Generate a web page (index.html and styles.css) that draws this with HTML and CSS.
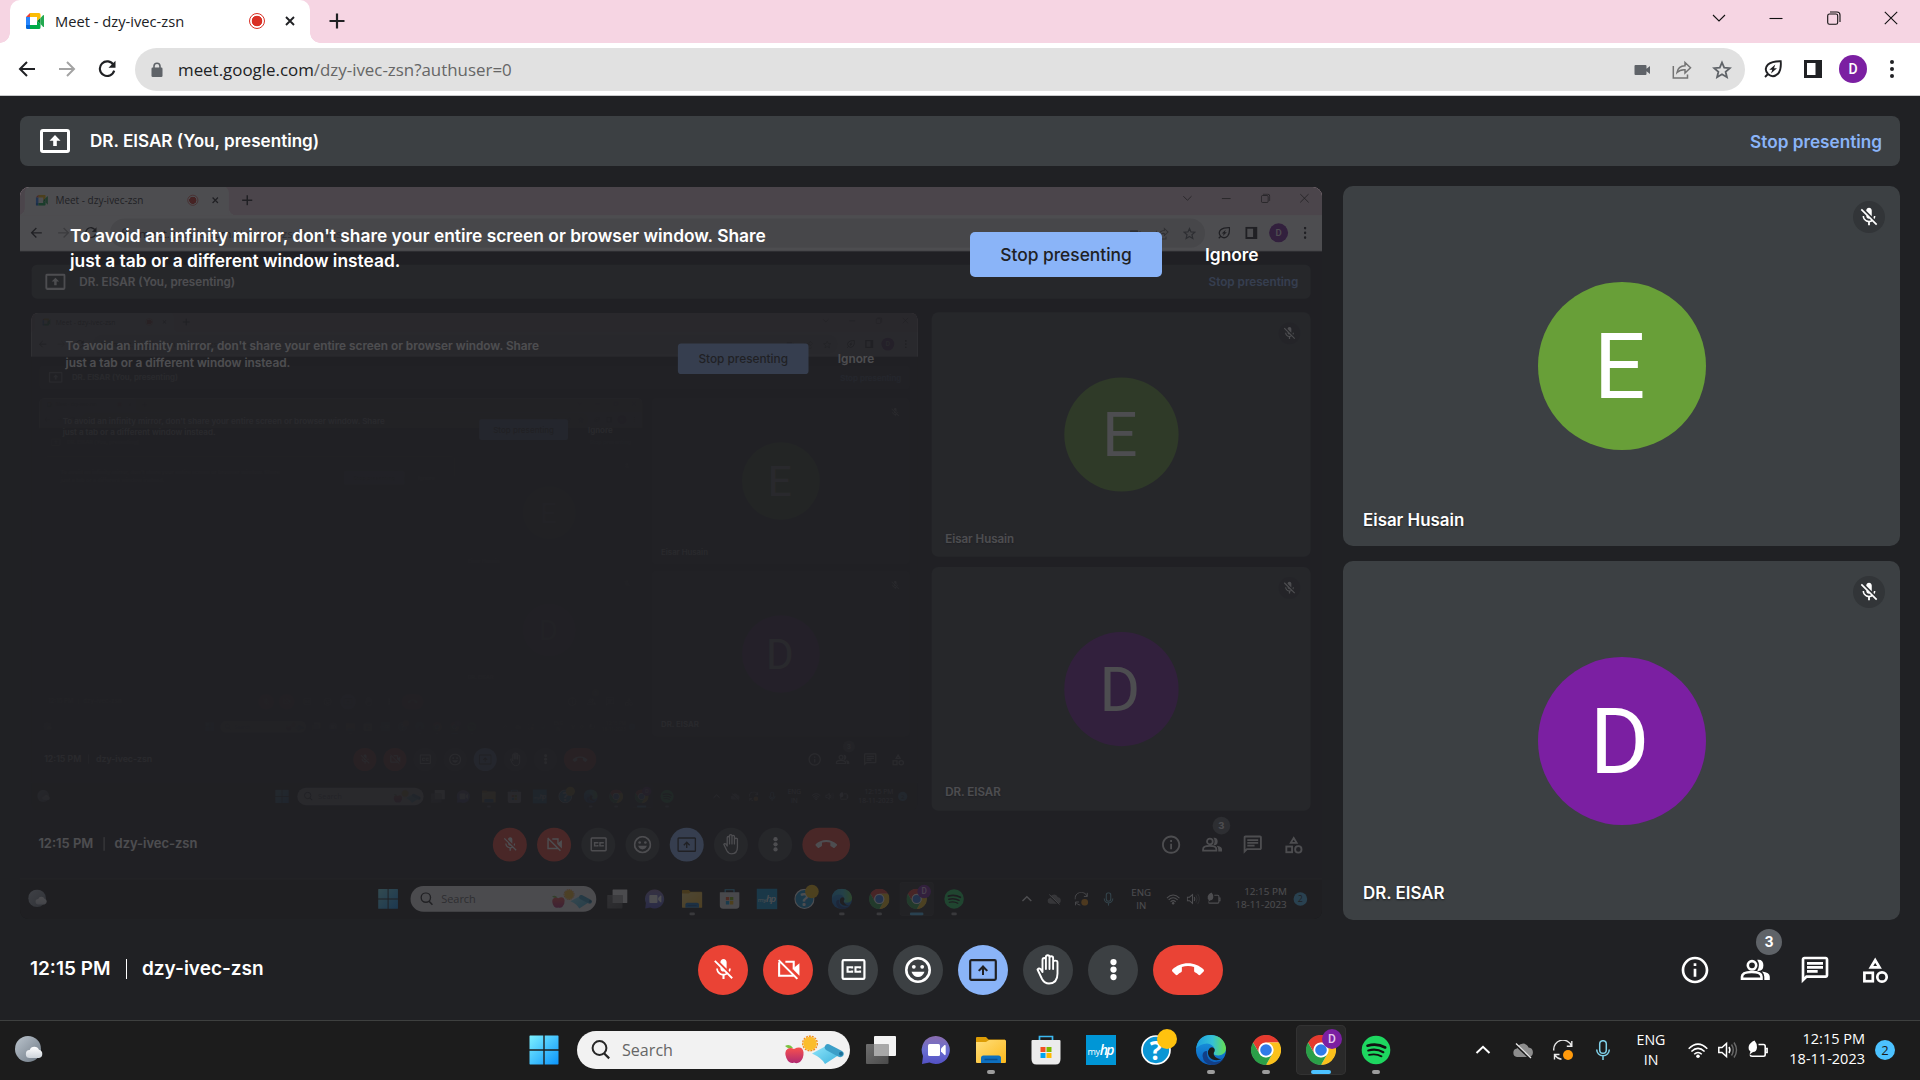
FILE: index.html
```html
<!DOCTYPE html>
<html lang="en">
<head>
<meta charset="utf-8">
<title>Meet - dzy-ivec-zsn</title>
<link rel="stylesheet" href="styles.css">
</head>
<body>
<svg class="defs" aria-hidden="true">
  <defs>
    <linearGradient id="win" x1="0" y1="0" x2="1" y2="1"><stop offset="0" stop-color="#7df1ff"/><stop offset="1" stop-color="#0b94fb"/></linearGradient>
    <linearGradient id="moon" x1="0" y1="0" x2="1" y2="1"><stop offset="0" stop-color="#bcc5ce"/><stop offset="1" stop-color="#6d7883"/></linearGradient>
    <linearGradient id="cloud" x1="0" y1="0" x2="0" y2="1"><stop offset="0" stop-color="#fff"/><stop offset="1" stop-color="#cdd3da"/></linearGradient>
    <linearGradient id="grey" x1="0" y1="0" x2="1" y2="1"><stop offset="0" stop-color="#6f6f6f"/><stop offset="1" stop-color="#4a4a4a"/></linearGradient>
    <linearGradient id="chat" x1="0" y1="0" x2="0" y2="1"><stop offset="0" stop-color="#8a6cae"/><stop offset=".5" stop-color="#6a6fd0"/><stop offset="1" stop-color="#5350c4"/></linearGradient>
    <linearGradient id="folder" x1="0" y1="0" x2="1" y2="1"><stop offset="0" stop-color="#ffde7a"/><stop offset="1" stop-color="#fcb91c"/></linearGradient>
    <linearGradient id="mat" x1="0" y1="0" x2="1" y2="1"><stop offset="0" stop-color="#8fe6fb"/><stop offset="1" stop-color="#3fb3dd"/></linearGradient>
    <linearGradient id="apple" x1="0" y1="0" x2="0" y2="1"><stop offset="0" stop-color="#f8514d"/><stop offset="1" stop-color="#b02a72"/></linearGradient>
    <linearGradient id="edgeTop" x1="0" y1="0" x2="1" y2="0"><stop offset="0" stop-color="#1c9fe0"/><stop offset=".55" stop-color="#35c1d6"/><stop offset="1" stop-color="#66e04c"/></linearGradient>
    <linearGradient id="edgeLow" x1="0" y1="0" x2="0" y2="1"><stop offset="0" stop-color="#1b9de2"/><stop offset="1" stop-color="#0a5fc0"/></linearGradient>
    <symbol id="mic-off" viewBox="0 0 24 24"><path fill="currentColor" d="M19 11h-1.7c0 .74-.16 1.43-.43 2.05l1.23 1.23c.56-.98.9-2.09.9-3.28zm-4.02.17c0-.06.02-.11.02-.17V5c0-1.66-1.34-3-3-3S9 3.34 9 5v.18l5.98 5.99zM4.27 3L3 4.27l6.01 6.01V11c0 1.66 1.33 3 2.99 3 .22 0 .44-.03.65-.08l1.66 1.66c-.71.33-1.5.52-2.31.52-2.76 0-5.3-2.1-5.3-5.1H5c0 3.41 2.72 6.23 6 6.72V21h2v-3.28c.91-.13 1.77-.45 2.54-.9L19.73 21 21 19.73 4.27 3z"/></symbol>
    <symbol id="chrome" viewBox="0 0 30 30"><circle cx="15" cy="15" r="14.500" fill="#fff"/><path fill="#e53a2e" d="M2 7.500A15 15 0 0 1 28 7.500H15A7.500 7.500 0 0 0 8.500 18.750Z"/><path fill="#fbc11c" d="M28 7.500A15 15 0 0 1 15 30L21.500 18.750A7.500 7.500 0 0 0 15 7.500Z"/><path fill="#2b9f48" d="M2 7.500A15 15 0 0 0 15 30L21.500 18.750A7.500 7.500 0 0 1 8.500 18.750Z"/><circle cx="15" cy="15" r="7.200" fill="#fff"/><circle cx="15" cy="15" r="5.800" fill="#2f7be9"/></symbol>
  </defs>
</svg>

<div class="screen">
  <header class="browser">
    <div class="tabstrip">
      <div class="tab">
        <svg class="favicon" viewBox="0 0 18 16"><path fill="#fbbc04" d="M4 0h9q1.500 0 1.500 1.500V5L11 8V4H4z"/><path fill="#ea4335" d="M4 0v4H0z"/><path fill="#2684fc" d="M0 4h4v8H0z"/><path fill="#0066da" d="M0 12h4v4H1.300Q0 16 0 14.700z"/><path fill="#00ac47" d="M4 12h7V8l3.500 3v3.500q0 1.500-1.500 1.500H4z"/><path fill="#00832d" d="M11 8l3.500-3v6z"/><path fill="#22a950" d="M14.500 5L17 2.200q1-.700 1 .400v10.800q0 1.100-1 .400L14.500 11z"/></svg>
        <span class="tab-title">Meet - dzy-ivec-zsn</span>
        <span class="record"></span>
        <svg class="tab-close" viewBox="0 0 10 10"><path d="M1 1l8 8M9 1L1 9" stroke="#202124" stroke-width="1.900"/></svg>
      </div>
      <svg class="new-tab" viewBox="0 0 16 16"><path d="M8 .500v15M.500 8h15" stroke="#202124" stroke-width="2.200"/></svg>
      <div class="window-controls">
        <svg viewBox="0 0 14 14"><path d="M1 4l6 6 6-6"/></svg>
        <svg viewBox="0 0 14 14"><path d="M.500 7.500h13"/></svg>
        <svg viewBox="0 0 14 14"><rect x=".700" y="3" width="10" height="10.300" rx="1.800"/><path d="M3 1h7q3 0 3 3v7"/></svg>
        <svg viewBox="0 0 14 14"><path d="M.800.800l12.400 12.400M13.200.800L.800 13.200"/></svg>
      </div>
    </div>
    <div class="toolbar">
      <svg class="nav" viewBox="0 0 18 18"><path d="M17 9H2.500M9 2L2 9l7 7" fill="none" stroke="#202124" stroke-width="2"/></svg>
      <svg class="nav" viewBox="0 0 18 18"><path d="M1 9h14.500M9 2l7 7-7 7" fill="none" stroke="#a3a3a3" stroke-width="2"/></svg>
      <svg class="nav" viewBox="0 0 18 18"><path d="M15.500 5A7.300 7.300 0 1 0 16.200 10.600" fill="none" stroke="#202124" stroke-width="2.100"/><path d="M17.500.800v7h-7z" fill="#202124"/></svg>
      <div class="omnibox">
        <svg class="lock" viewBox="0 0 12 16"><rect x=".500" y="5.500" width="11" height="9.500" rx="1.200" fill="#5f6368"/><path d="M3 6V4.200a3 3 0 0 1 6 0V6" fill="none" stroke="#5f6368" stroke-width="1.600"/></svg>
        <span class="url">meet.google.com<span class="path">/dzy-ivec-zsn?authuser=0</span></span>
        <svg class="omni-icon" viewBox="0 0 20 20"><path fill="#5f6368" d="M3.500 5h10q1 0 1 1v2.800L18 6v8l-3.500-2.800V14q0 1-1 1h-10q-1 0-1-1V6q0-1 1-1z"/></svg>
        <svg class="omni-icon" viewBox="0 0 20 20"><path fill="none" stroke="#747474" stroke-width="1.500" d="M1.300 6v12h14.200v-3.500M5 12.500q1-6.500 8-6.800V2.500l5.500 5.300L13 13V9.800q-5-.300-8 2.700z"/></svg>
        <svg class="omni-icon" viewBox="0 0 20 20"><path fill="none" stroke="#5f6368" stroke-width="1.800" d="M10 2.500l2.200 5.100 5.600.500-4.200 3.700 1.300 5.400L10 14.300l-4.900 2.900 1.300-5.400L2.200 8.100l5.600-.500z"/></svg>
      </div>
      <svg class="ext" viewBox="0 0 18 18"><path fill="none" stroke="#202124" stroke-width="1.900" d="M1 17l3-3M4 14q-4.500-5 0-9.500Q8 1 16.700 1.200 17.500 10 14 13.800 9 18.500 4 14z"/><path fill="#202124" d="M11.300 4.500L5.300 9.800h3L7 13.500l6-5.300h-3z"/></svg>
      <svg class="ext" viewBox="0 0 18 18"><path fill="#202124" fill-rule="evenodd" d="M0 0h18v18H0zM3 3v12h8.500V3z"/></svg>
      <span class="profile">D</span>
      <svg class="kebab" viewBox="0 0 4 18"><circle cx="2" cy="2" r="2"/><circle cx="2" cy="9" r="2"/><circle cx="2" cy="16" r="2"/></svg>
    </div>
  </header>

  <main class="meet">
    <div class="presenting">
      <svg class="present-icon" viewBox="0 0 30 24"><rect x="1.500" y="1.500" width="27" height="21" rx="1.500" fill="none" stroke="#fff" stroke-width="3"/><path fill="#fff" d="M15 6l5.500 5.700h-3.700V17h-3.600v-5.300H9.500z"/></svg>
      <span>DR. EISAR (You, presenting)</span>
      <span class="stop-link">Stop presenting</span>
    </div>

    <div class="stage">
      <div class="preview">
        <div class="notice">
          <p>To avoid an infinity mirror, don't share your entire screen or browser window. Share just a tab or a different window instead.</p>
          <span class="stop-button">Stop presenting</span>
          <span class="ignore">Ignore</span>
        </div>
      </div>
      <div class="tiles">
        <div class="tile">
          <span class="mute"><svg><use href="#mic-off"/></svg></span>
          <span class="avatar green">E</span>
          <span class="name">Eisar Husain</span>
        </div>
        <div class="tile">
          <span class="mute"><svg><use href="#mic-off"/></svg></span>
          <span class="avatar purple">D</span>
          <span class="name">DR. EISAR</span>
        </div>
      </div>
    </div>

    <div class="callbar">
      <div class="meeting"><span class="time">12:15 PM</span><span class="divider"></span><span class="code">dzy-ivec-zsn</span></div>
      <div class="controls">
        <span class="round red"><svg viewBox="0 0 24 24"><use href="#mic-off"/></svg></span>
        <span class="round red"><svg viewBox="0 0 24 24"><path fill="none" stroke="currentColor" stroke-width="2" d="M9 4.500h8v7.500M17 18H3V5M2.500 3L20.500 21"/><path fill="currentColor" d="M17 10.500L22.500 6v12L17 12.500z"/></svg></span>
        <span class="round"><svg viewBox="0 0 24 24"><rect x="1.500" y="3" width="21" height="18" rx="1.200" fill="none" stroke="currentColor" stroke-width="2.100"/><path fill="none" stroke="currentColor" stroke-width="2" d="M10.700 11V9.800H6.300v4.400h4.400V13M18.300 11V9.800h-4.400v4.400h4.400V13"/></svg></span>
        <span class="round"><svg class="smile" viewBox="0 0 26 26"><circle cx="13" cy="13" r="11.700" fill="none" stroke="currentColor" stroke-width="2.600"/><circle cx="8.800" cy="9.800" r="1.900" fill="currentColor"/><circle cx="17.200" cy="9.800" r="1.900" fill="currentColor"/><path fill="currentColor" d="M6.500 14.800h13q-2 5.200-6.500 5.200t-6.500-5.200z"/></svg></span>
        <span class="round blue"><svg class="wide" viewBox="0 0 28 24"><rect x="1.200" y="2.200" width="25.600" height="19.600" rx="1.200" fill="none" stroke="currentColor" stroke-width="2.200"/><path fill="currentColor" d="M14 7l5 5.200-1.400 1.400L15 11.200V17h-2v-5.800l-2.600 2.400L9 12.200z"/></svg></span>
        <span class="round"><svg class="hand" viewBox="0 0 24 31"><path fill="none" stroke="currentColor" stroke-width="1.900" stroke-linejoin="round" stroke-linecap="round" d="M6.500 18V6Q6.500 4 8.200 4T9.900 6v9M9.900 14V3Q9.900 1.200 11.700 1.200T13.500 3v12M13.500 14V4Q13.500 2.300 15.300 2.300T17.100 4v11M17.100 15V8.500q0-1.900 2.200-1.900T21.500 8.500V19.500q0 10-8.500 10-4.500 0-7-4.500L1.500 15.500q1.300-1.800 3-.500l2 3"/></svg></span>
        <span class="round"><svg viewBox="0 0 24 24" fill="currentColor"><circle cx="12" cy="4.800" r="3"/><circle cx="12" cy="12" r="3"/><circle cx="12" cy="19.200" r="3"/></svg></span>
        <span class="round red hangup"><svg viewBox="0 0 24 24"><path fill="currentColor" d="M12 9c-1.600 0-3.150.25-4.600.72v3.100c0 .39-.23.74-.56.9-.98.49-1.870 1.120-2.660 1.850-.18.18-.43.28-.7.28-.28 0-.53-.11-.71-.29L.29 13.080c-.18-.17-.29-.42-.29-.7 0-.28.11-.53.29-.71C3.340 8.780 7.460 7 12 7s8.660 1.780 11.710 4.670c.18.18.29.43.29.71 0 .28-.11.53-.29.71l-2.480 2.480c-.18.18-.43.29-.71.29-.27 0-.52-.11-.7-.28-.79-.74-1.690-1.360-2.670-1.850-.33-.16-.56-.5-.56-.9v-3.100C15.150 9.250 13.600 9 12 9z"/></svg></span>
      </div>
      <div class="panels">
        <span class="panel"><svg viewBox="0 0 24 24"><path fill="currentColor" d="M11 7h2v2h-2zm0 4h2v6h-2zm1-9C6.480 2 2 6.480 2 12s4.480 10 10 10 10-4.480 10-10S17.520 2 12 2zm0 18c-4.410 0-8-3.590-8-8s3.590-8 8-8 8 3.590 8 8-3.590 8-8 8z"/></svg></span>
        <span class="panel"><svg viewBox="0 0 32 32" fill="none" stroke="currentColor" stroke-width="2.600"><circle cx="13" cy="11.300" r="4.200"/><path d="M3 24.700v-2q0-4.700 9.700-4.700t9.800 4.700v2z"/><path fill="currentColor" stroke="none" d="M18.200 5.800q6.200-.800 6.200 5.500t-6.200 5.500q3.500-5.500 0-11zM23 17.500q7.800.900 7.800 5.300V26h-5.500v-3.300q0-2.800-2.300-5.200z"/></svg><span class="count">3</span></span>
        <span class="panel"><svg viewBox="0 0 24 24"><path fill="currentColor" d="M4 4h16v12H5.170L4 17.170V4m0-2c-1.100 0-1.990.9-1.990 2L2 22l4-4h14c1.100 0 2-.9 2-2V4c0-1.100-.9-2-2-2H4zm2 10h8v2H6v-2zm0-3h12v2H6V9zm0-3h12v2H6V6z"/></svg></span>
        <span class="panel"><svg viewBox="0 0 32 32" fill="none" stroke="currentColor" stroke-width="2.700"><path d="M16.200 6.200l4.300 7.200h-8.600z"/><rect x="5.400" y="18.800" width="8.400" height="8.400"/><circle cx="23" cy="23" r="4.700"/></svg></span>
      </div>
    </div>
  </main>

  <footer class="taskbar">
    <svg class="weather" viewBox="0 0 30 28"><circle cx="13" cy="13" r="13" fill="url(#moon)"/><path fill="url(#cloud)" d="M15 22a4 4 0 0 1-.300-8 5 5 0 0 1 9.300-.200 4.200 4.200 0 0 1 0 8.200z"/></svg>
    <div class="apps">
      <span class="app"><svg viewBox="0 0 30 30"><path fill="url(#win)" d="M1 .500h13.300v13.800H.500V1zM15.700.500H29l.500.500v13.300H15.700zM.500 15.700h13.800v13.800H1l-.500-.500zM15.700 15.700h13.800V29l-.500.500H15.700z"/></svg></span>
      <div class="search">
        <svg class="lens" viewBox="0 0 20 20"><circle cx="8.500" cy="8" r="6.900" fill="none" stroke="#262626" stroke-width="2"/><path d="M13 13.200l5.200 5.200" stroke="#262626" stroke-width="2.200"/></svg>
        <span>Search</span>
        <svg class="doodle" viewBox="0 0 60 30"><path fill="#7ac142" d="M1 11q5-2.500 8 2-5 1.500-8-2z"/><path fill="url(#apple)" d="M10 14q8-4 9.500 3 .500 6-3.500 10-3 2-6 .500-3 1.500-6-1.500-4-6-2-10.500 3-4 8-1.500z"/><circle cx="26" cy="8.500" r="7.300" fill="none" stroke="#f28a1c" stroke-width="1.400" stroke-dasharray="2 1"/><circle cx="26" cy="8.500" r="6.700" fill="#fbbd2e"/><path fill="url(#mat)" d="M28 18.500l13-7 13 9-13 8.500q-3-6-13-10.500z"/><path fill="#3b9fc8" d="M41 11q1-2.500 4-1.700L58 16q3 2 1 5-2 2-5 .500L42 15q-2-1.500-1-4z"/><circle cx="57" cy="18.700" r="2" fill="#1e6f96"/></svg>
      </div>
      <span class="app"><svg viewBox="0 0 30 30"><rect x="8" y="1" width="22" height="20" rx="1" fill="#f3f3f3"/><rect x="0" y="9" width="22.500" height="20" rx="1" fill="url(#grey)"/><path fill="#a8a8a8" d="M8 9h14.500v12H8z"/></svg></span>
      <span class="app"><svg viewBox="0 0 30 30"><path fill="url(#chat)" d="M15 1a14 14 0 1 1-6.500 26.500L1 29l1-8A14 14 0 0 1 15 1z"/><rect x="7" y="9" width="12" height="12" rx="1.500" fill="#fff"/><path fill="#fff" d="M20 13.500l3.500-3.500q1.200-.500 1.200 1v8q0 1.500-1.200 1L20 16.500z"/></svg></span>
      <span class="app running"><svg viewBox="0 0 30 30"><path fill="#dd9c05" d="M0 3q0-1 1-1h9l2.500 2.500H29V10H0z"/><path fill="url(#folder)" d="M0 7h10l3-2h16q1 0 1 1v21q0 1-1 1H1q-1 0-1-1z"/><path fill="#0e70bf" d="M5 28v-5q0-2.500 2.500-2.500h15q2.500 0 2.500 2.500v5z"/><path d="M8.500 24.500h13" stroke="#0a4f90" stroke-width="1.500"/></svg></span>
      <span class="app"><svg viewBox="0 0 30 30"><path fill="none" stroke="#3cb9f0" stroke-width="1.700" d="M8.500 6V1.500h13V6"/><path fill="#ececec" d="M.500 6q0-1 1-1h27q1 0 1 1v18q0 5.500-5 5.500h-19q-5 0-5-5.500z"/><path fill="#f25022" d="M9.500 12h5v5h-5z"/><path fill="#7fba00" d="M15.500 12h5v5h-5z"/><path fill="#00a4ef" d="M9.500 18h5v5h-5z"/><path fill="#ffb900" d="M15.500 18h5v5h-5z"/></svg></span>
      <span class="app"><span class="myhp">my<b>hp</b></span></span>
      <span class="app"><svg viewBox="0 0 30 30"><circle cx="15" cy="15" r="14" fill="#0b96d5" stroke="#fff" stroke-width="1.700"/></svg><span class="question">?</span><span class="alert"></span></span>
      <span class="app running"><svg viewBox="0 0 30 30"><circle cx="15" cy="15" r="15" fill="url(#edgeLow)"/><path fill="#123f87" d="M11 16q-1 9 7 11 5 .700 9.500-3-4.500 6.500-12 6-8-1-9-9 0-5 4.500-5z"/><path fill="url(#edgeTop)" d="M.200 13.500Q2 0 15 0q13 1 15 13 0 7-7.500 7.500-5 0-5-2.500 1.500-1.500 1-4Q17 9 11 8.500 4 9 .200 13.500z"/><path fill="#1c1c1c" d="M17.700 18q1.500-1.500.900-4-2-3-5.200-.500-3 4 0 8.500 5 5.500 13.500 1.500-3 1-6-.500-3.500-2-3.200-5z"/></svg></span>
      <span class="app running"><svg><use href="#chrome"/></svg></span>
      <span class="app running active"><svg><use href="#chrome"/></svg><span class="user">D</span></span>
      <span class="app running"><svg viewBox="0 0 30 30"><circle cx="15" cy="15" r="14.300" fill="#1ed760"/><path fill="none" stroke="#111" stroke-linecap="round" stroke-width="2.600" d="M6.500 10.700q9.500-2.800 17.700 1.800"/><path fill="none" stroke="#111" stroke-linecap="round" stroke-width="2.200" d="M7.300 15.500q8.200-2.200 15 1.700"/><path fill="none" stroke="#111" stroke-linecap="round" stroke-width="1.800" d="M8 19.900q7-1.700 12.500 1.500"/></svg></span>
    </div>
    <div class="tray">
      <span class="cell"><svg viewBox="0 0 20 20"><path fill="none" stroke="#fff" stroke-width="2" d="M3.500 13L10 6.800l6.500 6.200"/></svg></span>
      <span class="cell"><svg viewBox="0 0 20 20"><path fill="#8d8d8d" d="M4 17a4.300 4.300 0 0 1 0-8.500A6 6 0 0 1 15.500 7.500a4.800 4.800 0 0 1 .500 9.500z"/><path d="M2.500 4.500l15 14" stroke="#1c1c1c" stroke-width="2.500"/><path d="M3 3.500l15 14.500" stroke="#e6e6e6" stroke-width="1.300"/></svg></span>
      <span class="cell"><svg viewBox="0 0 20 20"><path fill="none" stroke="#e8e8e8" stroke-width="1.400" d="M.800 10.500A9.200 9.200 0 0 1 18.500 6M18.800 1v5.300h-5M8.500 19.300Q4 18.500 1.700 14.800M1.500 19.500v-5h5"/><circle cx="15" cy="15" r="5" fill="#ff9a0c"/></svg></span>
      <span class="cell"><svg viewBox="0 0 20 20"><path fill="none" stroke="#7fd0e8" stroke-width="1.500" d="M6.700 4A3.300 3.300 0 0 1 13.300 4v6A3.300 3.300 0 0 1 6.700 10zM3.700 9.500a6.300 6.300 0 0 0 12.600 0M10 16v4"/></svg></span>
      <span class="lang">ENG<br>IN</span>
      <span class="cell narrow"><svg viewBox="0 0 20 20"><g fill="none" stroke="#fff" stroke-width="1.500"><path d="M.700 8.700q9.300-9.200 18.600 0"/><path d="M3.400 11.500q6.600-6.300 13.200 0M6.200 14.200q3.800-3.500 7.600 0"/></g><circle cx="10" cy="16.300" r="1.800" fill="#fff"/></svg></span>
      <span class="cell narrow"><svg viewBox="0 0 20 20"><path fill="none" stroke="#fff" stroke-width="1.500" d="M.800 7.500H4L8.500 3.500v13L4 12.500H.800zM11 7q1.800 3 0 6"/><path fill="none" stroke="#6a6a6a" stroke-width="1.400" d="M13.500 4.500q3.500 5.500 0 11M16 2.500q5 7.500 0 15"/></svg></span>
      <span class="cell narrow"><svg viewBox="0 0 20 20"><path fill="none" stroke="#fff" stroke-width="1.600" d="M10.500 4.500h5q1.700 0 1.700 1.700v8.300q0 1.700-1.700 1.700H4q-1.700 0-1.700-1.500M17.200 8.500h1.900v4h-1.900"/><path fill="#fff" d="M6.500.500q3 3.500 2.500 7-.500 4.500-4 4.500L1.500 14.500Q2 13 2.500 11.500 0 10 .800 6 2 2.500 6.500.500z"/></svg></span>
      <span class="clock">12:15 PM<br>18-11-2023</span>
      <span class="notifications">2</span>
    </div>
  </footer>
</div>
<script src="mirror.js"></script>
</body>
</html>
```
FILE: styles.css
```css
* { box-sizing: border-box; }
body { margin: 0; width: 1920px; height: 1080px; overflow: hidden; background: #202124; }
svg { display: block; flex: none; }
.defs { position: absolute; width: 0; height: 0; }

.screen { width: 1920px; height: 1080px; display: flex; flex-direction: column; background: #202124; font-family: Inter, "Liberation Sans", sans-serif; font-weight: 600; color: #fff; }

/* Browser chrome */
.browser { height: 96px; flex: none; background: #fff; border-bottom: 1px solid #c9cacc; font-family: "Open Sans", "Noto Sans", sans-serif; font-weight: 400; color: #202124; }
.tabstrip { height: 43px; background: #f6d5e3; display: flex; padding-left: 10px; }
.tab { width: 300px; height: 43px; flex: none; background: #fff; border-radius: 10px 10px 0 0; display: flex; align-items: center; padding: 0 15px 1px 16px; position: relative; }
.tab::before, .tab::after { content: ""; position: absolute; bottom: 0; width: 10px; height: 10px; }
.tab::before { left: -10px; background: radial-gradient(circle at 0 0, transparent 9.5px, #fff 10px); }
.tab::after { right: -10px; background: radial-gradient(circle at 100% 0, transparent 9.5px, #fff 10px); }
.favicon { width: 18px; height: 16px; }
.tab-title { margin-left: 11px; padding-bottom: 1px; font-size: 14.7px; line-height: 20px; width: 194px; white-space: nowrap; }
.record { width: 16px; height: 16px; flex: none; border-radius: 50%; border: 1.5px solid #d93025; background: radial-gradient(circle, #d93025 5px, #fff 5.6px); }
.tab-close { width: 10px; height: 10px; margin-left: auto; }
.new-tab { width: 16px; height: 16px; margin: 13px 0 0 19px; }
.window-controls { margin-left: auto; padding: 11px 22px 0 0; display: flex; gap: 43.3px; }
.window-controls svg { width: 14px; height: 14px; fill: none; stroke: #111; stroke-width: 1.1; }
.toolbar { height: 52px; display: flex; align-items: center; padding-left: 18px; }
.nav { width: 18px; height: 18px; margin-right: 22px; }
.omnibox { width: 1610px; height: 43px; margin: 1px 19px 0 -3px; background: #e1e1e1; border-radius: 22px; display: flex; align-items: center; padding: 0 13px 0 16px; }
.lock { width: 12px; height: 16px; }
.url { margin-left: 15px; margin-right: auto; font-size: 16.9px; line-height: 24px; white-space: nowrap; }
.url .path { color: #666; }
.omni-icon { width: 20px; height: 20px; margin-left: 20px; }
.ext { width: 18px; height: 18px; margin-right: 22px; }
.profile { width: 28px; height: 28px; margin: 0 23px 0 -5px; border-radius: 50%; background: #7b1fa2; color: #fff; font: 500 14px/28px Roboto, sans-serif; text-align: center; }
.kebab { width: 4px; height: 18px; fill: #202124; }

/* Meeting */
.meet { height: 924px; flex: none; padding: 20px 20px 0; }
.presenting { height: 50px; border-radius: 8px; background: #3c4043; display: flex; align-items: center; padding: 0 18px 0 20px; font-size: 17.1px; line-height: 24px; }
.present-icon { width: 30px; height: 24px; margin-right: 20px; }
.stop-link { margin-left: auto; color: #8ab4f8; font-size: 17.2px; padding-top: 2px; }
.stage { margin-top: 20px; display: flex; justify-content: space-between; height: 735px; }
.preview { position: relative; width: 1302px; height: 732px; margin-top: 1px; border-radius: 9px; overflow: hidden; background: #202124; }
.preview .mirror { position: absolute; left: -2px; top: -1px; transform-origin: 0 0; transform: scale(.6803, .679); }
.notice { position: relative; width: 1302px; height: 732px; background: rgba(33, 32, 36, .8); display: flex; align-items: flex-start; padding: 36px 0 0 50px; font-size: 17.37px; line-height: 25px; }
.notice p { margin: 0; width: 720px; flex: none; }
.stop-button { margin: 9px 0 0 180px; width: 192px; height: 45px; border-radius: 5px; background: #8ab4f8; color: #202124; text-align: center; line-height: 46px; font-weight: 500; }
.ignore { margin: 19px 0 0 43px; }
.tiles { width: 557px; display: flex; flex-direction: column; gap: 15px; }
.tile { position: relative; height: 360px; border-radius: 10px; background: #3c4043; display: flex; align-items: center; justify-content: center; }
.tile + .tile { height: 359px; }
.tile + .tile .name { bottom: 15px; }
.avatar { width: 168px; height: 168px; padding-right: 4px; border-radius: 50%; font: 400 91px/171px Roboto, sans-serif; text-align: center; }
.green { background: #689f38; }
.purple { background: #7b1fa2; }
.mute { position: absolute; top: 15px; right: 15px; width: 32px; height: 32px; border-radius: 50%; background: #323538; display: flex; align-items: center; justify-content: center; }
.mute svg { width: 22px; height: 22px; }
.name { position: absolute; left: 20px; bottom: 14px; font-size: 16.9px; line-height: 24px; text-shadow: 0 1px 2px rgba(0, 0, 0, .6); }

.callbar { height: 99px; display: flex; align-items: center; justify-content: space-between; padding: 0 0 2px 10px; position: relative; }
.meeting { width: 668px; display: flex; align-items: center; font-size: 19px; line-height: 28px; padding-bottom: 2px; }
.divider { width: 1px; height: 20px; background: #fff; margin: 0 15px; }
.time { width: 81px; white-space: nowrap; }
.controls { display: flex; gap: 15px; margin-right: auto; }
.round { width: 50px; height: 50px; border-radius: 25px; background: #3c4043; display: flex; align-items: center; justify-content: center; }
.round svg { width: 25px; height: 25px; }
.round .smile { width: 26px; height: 26px; }
.round .wide { width: 28px; height: 24px; }
.round .hand { width: 24px; height: 31px; }
.round.red { background: #ea4335; }
.round.blue { background: #8ab4f8; color: #202124; }
.round.hangup { width: 70px; }
.hangup svg { width: 32px; height: 32px; }
.panels { display: flex; margin-right: -5px; }
.panel { position: relative; width: 60px; display: flex; justify-content: center; }
.panel svg { width: 32px; height: 32px; }
.count { position: absolute; left: 31px; top: -25px; width: 26px; height: 26px; border-radius: 50%; background: #5f6368; font-size: 14px; line-height: 25px; text-align: center; font-weight: 700; }

/* Taskbar */
.taskbar { height: 60px; flex: none; background: #1c1c1c; border-top: 1px solid #3e403f; display: flex; align-items: center; padding: 0 25px 1px 15px; font-family: "Open Sans", "Noto Sans", sans-serif; font-weight: 400; }
.weather { width: 30px; height: 28px; }
.apps { display: flex; align-items: center; gap: 5px; margin-left: 474px; }
.app { position: relative; width: 50px; height: 50px; display: flex; align-items: center; justify-content: center; border-radius: 5px; }
.app > svg { width: 30px; height: 30px; }
.search { width: 273px; height: 38px; margin: 0 1px 0 3px; border-radius: 19px; background: #f2f2f2; color: #666; display: flex; align-items: center; padding: 0 6px 0 14px; font-size: 16.1px; line-height: 24px; }
.lens { width: 20px; height: 20px; margin-right: 11px; }
.doodle { width: 60px; height: 30px; margin-left: auto; }
.running::after { content: ""; position: absolute; left: 21px; bottom: 1px; width: 8px; height: 4px; border-radius: 2px; background: #9c9c9c; }
.active { background: #292929; box-shadow: inset 0 0 0 1px #323232; }
.active::after { left: 15px; width: 20px; background: #4cc2ff; }
.user { position: absolute; left: 26px; top: 4px; width: 20px; height: 20px; border-radius: 50%; background: #7b1fa2; color: #e5c8ee; font: 500 12px/20px Roboto, sans-serif; text-align: center; }
.myhp { width: 30px; height: 30px; background: #0096d6; font-size: 9px; line-height: 29px; text-align: center; letter-spacing: -.3px; white-space: nowrap; }
.myhp b { font: italic 600 14px/29px "Open Sans", sans-serif; letter-spacing: -1.8px; padding-right: 2px; }
.question { position: absolute; left: 0; right: 0; top: 10px; font: 700 26px/30px "Open Sans", sans-serif; text-align: center; }
.alert { position: absolute; left: 26px; top: 4px; width: 20px; height: 20px; border-radius: 50%; background: #ffc20e; }
.tray { margin-left: auto; display: flex; align-items: center; font-size: 14.5px; line-height: 20px; }
.cell { width: 40px; display: flex; justify-content: center; }
.narrow { width: 30px; }
.tray svg { width: 20px; height: 20px; }
.lang { width: 56px; margin-right: 4px; font-size: 14.2px; text-align: center; padding-bottom: 1px; }
.clock { width: 92px; text-align: right; white-space: nowrap; padding-bottom: 2px; }
.notifications { width: 20px; height: 20px; margin-left: 10px; border-radius: 50%; background: #4cc2ff; color: #1c1c1c; font-size: 13px; text-align: center; }
```
FILE: mirror.js
```js
// The shared screen shows itself: nest scaled copies of the screen in its own preview.
const screenEl = document.querySelector('.screen');
const template = screenEl.cloneNode(true);
let host = screenEl;
for (let level = 0; level < 4; level++) {
  const copy = template.cloneNode(true);
  copy.classList.add('mirror');
  copy.setAttribute('aria-hidden', 'true');
  host.querySelector('.preview').prepend(copy);
  host = copy;
}
```
